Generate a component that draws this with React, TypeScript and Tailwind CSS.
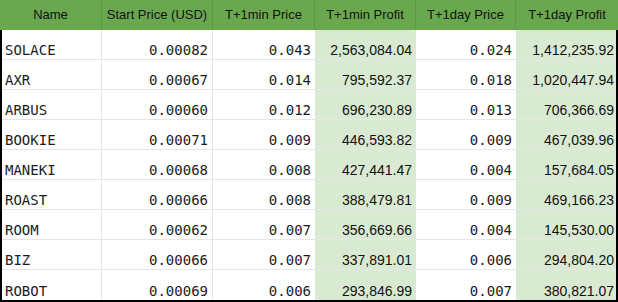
import React from "react";

const rows = [
  ["SOLACE", "0.00082", "0.043", "2,563,084.04", "0.024", "1,412,235.92"],
  ["AXR", "0.00067", "0.014", "795,592.37", "0.018", "1,020,447.94"],
  ["ARBUS", "0.00060", "0.012", "696,230.89", "0.013", "706,366.69"],
  ["BOOKIE", "0.00071", "0.009", "446,593.82", "0.009", "467,039.96"],
  ["MANEKI", "0.00068", "0.008", "427,441.47", "0.004", "157,684.05"],
  ["ROAST", "0.00066", "0.008", "388,479.81", "0.009", "469,166.23"],
  ["ROOM", "0.00062", "0.007", "356,669.66", "0.004", "145,530.00"],
  ["BIZ", "0.00066", "0.007", "337,891.01", "0.006", "294,804.20"],
  ["ROBOT", "0.00069", "0.006", "293,846.99", "0.007", "380,821.07"],
];

const headers = [
  "Name",
  "Start Price (USD)",
  "T+1min Price",
  "T+1min Profit",
  "T+1day Price",
  "T+1day Profit",
];

const mono = "font-['DejaVu_Sans_Mono',monospace] text-[14px] leading-[18px]";
const sans = "font-['Liberation_Sans',Arial,sans-serif] text-[14px] leading-[18px]";

export default function App() {
  return (
    <div className="w-[618px] h-[302px] bg-white overflow-hidden">
      {/* header */}
      <div className="grid grid-cols-[102px_111px_102px_101px_100px_102px] h-[30px] bg-[#6aa84f]">
        {headers.map((h, i) => (
          <div
            key={h}
            className={`flex items-center justify-center text-[13px] text-[#111] font-['Liberation_Sans',Arial,sans-serif] ${
              i < 5 ? "border-r border-[#5e9a45]" : ""
            }`}
          >
            {h}
          </div>
        ))}
      </div>
      {/* body */}
      <div className="w-[618px] border-x-2 border-b-2 border-black">
        {rows.map((r, ri) => (
          <div
            key={r[0]}
            className={`grid grid-cols-[100px_111px_102px_101px_100px_100px] h-[30px] ${
              ri < rows.length - 1 ? "border-b border-[#e6e6e6]" : ""
            }`}
          >
            <div className={`flex items-end pl-[3px] text-[#1c1c1c] border-r border-[#e6e6e6] ${mono}`}>
              {r[0]}
            </div>
            <div className={`flex items-end justify-end pr-[4px] text-[#1c1c1c] border-r border-[#e6e6e6] ${mono}`}>
              {r[1]}
            </div>
            <div className={`flex items-end justify-end pr-[4px] text-[#1c1c1c] ${mono}`}>
              {r[2]}
            </div>
            <div className={`flex items-end justify-end pr-[4px] text-[#111] bg-[#d9ead3] ${sans}`}>
              {r[3]}
            </div>
            <div className={`flex items-end justify-end pr-[4px] text-[#1c1c1c] ${mono}`}>
              {r[4]}
            </div>
            <div className={`flex items-end justify-end pr-[2px] text-[#111] bg-[#d9ead3] ${sans}`}>
              {r[5]}
            </div>
          </div>
        ))}
      </div>
    </div>
  );
}
